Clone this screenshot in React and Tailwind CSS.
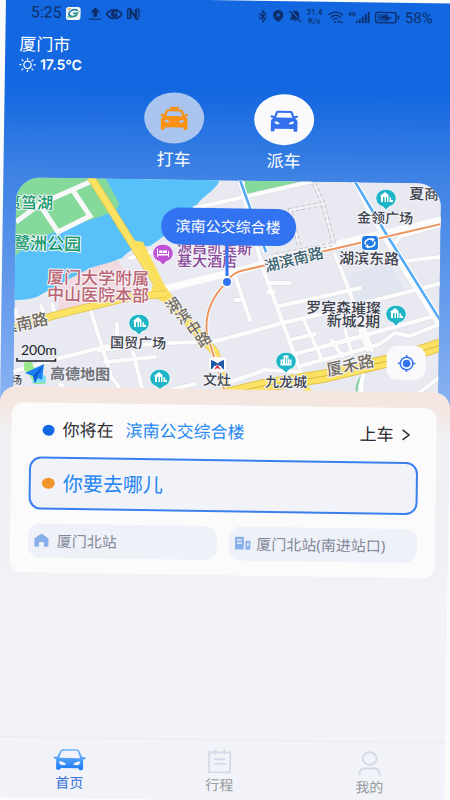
import React from "react";

const CJK = "font-['Noto_Sans','Noto_Sans_CJK_SC',sans-serif]";

function StatusBar() {
  return (
    <div className="flex h-[30px] items-center justify-between pl-[25px] pr-[23px] text-[#0c2f6b]">
      <div className="flex items-center gap-1">
        <span className="font-['Roboto',sans-serif] text-base leading-5">5:25</span>
        <svg width="15" height="13" viewBox="0 0 15 13">
          <rect width="15" height="13" rx="3" fill="#f2f6f8" />
          <path d="M12 3.6C9 1.6 4 3 3.2 6.4c-.5 3 4.500 4.500 7.600 1.600l.4-1.700H7.500" fill="none" stroke="#1f7fa8" strokeWidth="1.700" />
          <path d="M1.500 9.500C4 11.500 11 9 13.500 4" fill="none" stroke="#4cae6a" strokeWidth="1" />
          <path d="M2 2.500l3-1" stroke="#f2a13a" strokeWidth="1.200" />
        </svg>
        <svg className="ml-1" width="13" height="13" viewBox="0 0 13 13" fill="currentColor">
          <path d="M6.500 0 11.500 5.200H8.300V9.500H4.700V5.200H1.500zM0 11.300h13v1.100H0z" />
        </svg>
        <svg width="17" height="11" viewBox="0 0 17 11">
          <path d="M.8 5.500C4.500-.2 12.500-.2 16.200 5.500 12.500 11.200 4.500 11.200.8 5.500z" fill="none" stroke="currentColor" strokeWidth="1.600" />
          <circle cx="8.500" cy="5.300" r="3.300" fill="currentColor" />
          <circle cx="9.500" cy="4.300" r="1" fill="#1367e0" />
        </svg>
        <svg width="13" height="12" viewBox="0 0 13 12">
          <path d="M4 .8H2.500Q.8.800.8 2.500v7q0 1.700 1.700 1.700M9 11.200h1.500q1.700 0 1.700-1.700v-7Q12.200.8 10.500.8" fill="none" stroke="currentColor" strokeWidth="1.500" />
          <path d="M3.800 11V2.200L9.200 9.800V1" fill="none" stroke="currentColor" strokeWidth="2.200" />
        </svg>
      </div>
      <div className="flex items-center gap-[5px]">
        <svg width="10" height="13" viewBox="0 0 10 13" fill="none" stroke="currentColor" strokeWidth="1.200">
          <path d="M1.500 3.500 8 9 5 12V1l3 3-6.500 5.500" />
          <path d="M.3 6.500h1.200M8.700 6.500h1.200" />
        </svg>
        <svg width="11" height="12" viewBox="0 0 11 12">
          <path d="M5.500 0a5.200 5 0 0 1 5.200 5c0 3-2.700 5.200-5.200 7C3 10.200.3 8 .3 5a5.200 5 0 0 1 5.200-5z" fill="currentColor" />
          <circle cx="5.500" cy="4.900" r="1.600" fill="#1367e0" />
        </svg>
        <svg width="13" height="12" viewBox="0 0 13 12">
          <path d="M6.500.3c2.800.5 3.800 2 3.800 4.300 0 2.300.4 3.400 1.700 4.900H1c1.300-1.500 1.700-2.600 1.700-4.900C2.700 2.300 3.700.8 6.500.3zM5 10.200h3q-1.500 2.200-3 0z" fill="currentColor" />
          <path d="M1.500 0 13 11.500" stroke="#1367e0" strokeWidth="1.200" />
          <path d="M.4.5 12.300 12" stroke="currentColor" strokeWidth="1.200" />
        </svg>
        <span className="flex flex-col items-center font-['Roboto',sans-serif] text-[8px] font-medium leading-[9px]">
          <span>31.4</span>
          <span>K/s</span>
        </span>
        <svg width="16" height="13" viewBox="0 0 16 13" fill="none" stroke="currentColor" strokeWidth="1.300">
          <path d="M.8 4.200Q8-2.200 15.200 4.200M3 6.600Q8 2.200 13 6.600M5.200 9Q8 6.600 10 8.200" />
          <circle cx="7.500" cy="11.200" r="1" fill="currentColor" stroke="none" />
          <path d="M10 11h5M11.500 9.800l-1.500 1.200M13.500 12.200l1.500-1.200" strokeWidth="1" />
        </svg>
        <span className="flex items-start">
          <span className="font-['Roboto',sans-serif] text-[6px] font-bold leading-[6px]">4G</span>
          <svg width="14" height="12" viewBox="0 0 14 12" fill="currentColor">
            <path d="M0 9.500h2V12H0zM3 8h2v4H3zM6 5.500h2V12H6zM9 3h2v9H9zM12 .5h2V12h-2z" />
          </svg>
        </span>
        <svg width="25" height="12" viewBox="0 0 25 12">
          <rect x=".7" y=".7" width="20.600" height="10.600" rx="2.500" fill="none" stroke="currentColor" strokeWidth="1.400" />
          <rect x="2.500" y="2.500" width="11" height="7" rx="1" fill="currentColor" opacity=".45" />
          <path d="M5 6.200 12 2.500v2.700l5.500.6L11 9.500V6.900z" fill="currentColor" />
          <path d="M23.800 4v4" stroke="currentColor" strokeWidth="1.600" />
        </svg>
        <span className="font-['Roboto',sans-serif] text-[15px] leading-5">58%</span>
      </div>
    </div>
  );
}

function CarGlyph({ taxi }) {
  return (
    <svg width="28" height="24" viewBox="0 0 28 24" fill="currentColor">
      {taxi && <path d="M9.500 3V1.500Q9.500.3 10.700.3h6.600q1.200 0 1.200 1.200V3z" />}
      <path
        fillRule="evenodd"
        d="M7.500 2.800h13q1.600 0 2 1.400l1.400 3.800 3-.6q.9 0 .9 1t-1 1.100l-2 .4q2.500 1.400 2.500 3.600v9q0 .9-1 .9h-1.800q-1 0-1-.9v-1.700h-19v1.700q0 .9-1 .9H1.700q-1 0-1-.9v-9q0-2.200 2.500-3.600l-2-.4q-1-.1-1-1.100t.9-1l3 .6 1.400-3.800q.4-1.400 2-1.400zM7.700 4.800 5.800 9.500h16.400l-1.900-4.700zM5 13.200q-.8 0-.6.9.4 2 2.200 2h2.200q1 0 .4-.9-1.400-2-4.200-2zm18 0q-2.800 0-4.200 2-.6.9.4.9h2.200q1.800 0 2.200-2 .2-.9-.6-.9z"
      />
    </svg>
  );
}

function Modes() {
  return (
    <div className="grid grid-cols-[110px_110px] justify-center">
      <button className="flex flex-col items-center gap-[6px] text-[17px] leading-5 text-white">
        <span className="flex h-[51px] w-[60px] items-center justify-center rounded-[50%] bg-[#a9c4ef] text-[#fb9110]">
          <CarGlyph taxi />
        </span>
        打车
      </button>
      <button className="flex flex-col items-center gap-[6px] text-[17px] leading-5 text-white">
        <span className="flex h-[51px] w-[60px] items-center justify-center rounded-[50%] bg-[#fafafc] text-[#3270ee]">
          <CarGlyph />
        </span>
        派车
      </button>
    </div>
  );
}

function Label({ x, y, size = 14, color = "#3c414c", angle = 1, anchor = "middle", children }) {
  return (
    <text
      transform={`translate(${x} ${y}) rotate(${angle})`}
      fontSize={size}
      fill={color}
      textAnchor={anchor}
      stroke="#f6f6fa"
      strokeWidth="2"
      strokeLinejoin="round"
      paintOrder="stroke"
      fontWeight="500"
    >
      {children}
    </text>
  );
}

function Pin({ x, y, color = "#1fb5c6", kind = "mall" }) {
  return (
    <g transform={`translate(${x} ${y})`}>
      <path d="M0 12-3 8.800A10.200 9 0 1 1 3 8.800z" fill={color} stroke="#fff" strokeWidth=".8" />
      {kind === "mall" && (
        <path fill="#fff" fillRule="evenodd" d="M-6-2-1-6 2.500-3V4h-7.500V-1.500zM-3-1v5h1.500v-5zM0-1v5h1v-5zM3.500-1h1l1 3h1.500v2h-3.500z" />
      )}
      {kind === "city" && (
        <path fill="#fff" fillRule="evenodd" d="M-5.500-1.500h3v-4h5v4h3v6h-11zM-.8-3.500v6h.8v-6zM1-3.500v6h.6v-6zM-4 0v3h.6V0zM3.500 0v3h.6V0z" />
      )}
      {kind === "bed" && (
        <path fill="#fff" d="M-6-4.500h1V1H5v-3h1v6H5V2.500H-5V4h-1zM-4-2.500h3.500V0H-4zM0-2.500h4V0H0z" />
      )}
    </g>
  );
}

function MapView() {
  const roads = [
    "M180 257 218 236M150 292 250 268 285 256 380 236 450 218",
    "M195 208 310 182M130 258l22-6",
    "M98 350 160 343 212 342 250 332 282 323 330 312 450 281",
    "M15 371 60 358 108 346",
    "M91 312 112 378 125 395M117 324v18",
    "M41 306l6 14M52 304l4 12M15 310l4 12",
    "M105 362 155 357M133 352l10 40",
    "M235 276 250 320M240 300h-5",
    "M262 266 300 370 305 382",
    "M240 182 262 266",
    "M208 220 214 258M220 222l8 20",
    "M270 283h20M268 292h6",
    "M335 254 372 350M355 182l15 32 30 50 50 80",
    "M280 306 360 288M290 340 315 334M295 354 450 312",
    "M304 320 322 360M332 340 342 356M345 330 352 354M360 330 368 350",
    "M395 243l6-7 50-14M398 262l50-6",
    "M230 382 265 370 300 372 M310 378 360 366",
    "M145 396 195 384M420 392 450 370",
    "M300 366 360 350 380 344 395 333 410 336 450 320",
    "M60 384 75 396M310 350 370 335",
  ];
  return (
    <svg
      className="block h-full w-full font-['Noto_Sans_CJK_SC',sans-serif]"
      viewBox="0 0 425 214"
      preserveAspectRatio="xMidYMid slice"
      role="img"
      aria-label="地图"
    >
      <g transform="translate(-13 -180) rotate(-0.850) translate(-6 3)">
        <rect x="0" y="160" width="460" height="260" fill="#e9eaf1" />
        <path d="M0 160H222L219 182C212 194 196 199 194 212 180 224 162 238 150 246 134 246 128 252 122 258 100 266 60 284 42 294 30 302 20 298 0 302z" fill="#58c1fa" />
        <path d="M102 172 119 203Q119 210 110 213L55 232Q40 238 32 244 18 250 10 264V160H102z" fill="#85d99a" />
        <path d="M116 222 138 252 132 250 116 226z" fill="#85d99a" />
        <path d="M245 176h62l-8 8-54 14z" fill="#85d99a" />
        <path d="M90 268 118 260 130 282 152 290 134 296 58 312 60 284z" fill="#f2d9df" />
        <path d="M348 275 390 262 405 290 355 302z" fill="#e1e5f0" />
        <path d="M16 222 40 204 92 181M42 208 58 232 90 216 72 189" fill="none" stroke="#f8f8fa" strokeWidth="5" />
        {roads.map((d) => (
          <path key={`edge-${d}`} d={d} fill="none" stroke="#d9dbe2" strokeWidth="5" strokeLinejoin="round" strokeLinecap="round" />
        ))}
        {roads.map((d) => (
          <path key={d} d={d} fill="none" stroke="#fcfcfd" strokeWidth="4" strokeLinejoin="round" strokeLinecap="round" />
        ))}
        <path d="M152 292 250 268 285 256 450 218" fill="none" stroke="#fcfcfd" strokeWidth="7" />
        <path d="M314 183 323 204 334 244 272 256M323 204 290 210 299 245" fill="none" stroke="#b9bbc2" strokeWidth="4" strokeDasharray="4 2" />
        <path d="M314 183 323 204 334 244 272 256M323 204 290 210 299 245" fill="none" stroke="#f3f3f7" strokeWidth="2.400" />
        <path d="M240 180 266 252M354 180 385 232 450 336" fill="none" stroke="#fff" strokeWidth="5" />
        <path d="M240 180 266 252M354 180 385 232 450 336" fill="none" stroke="#57aaf6" strokeWidth="2.600" />
        <path d="M90 176 132 243 166 298 215 352 230 400" fill="none" stroke="#e3c348" strokeWidth="8" />
        <path d="M90 176 132 243 166 298 215 352 230 400" fill="none" stroke="#fbe263" strokeWidth="6.600" />
        <path d="M132 240 143 242 165 286 174 298 164 302 150 296 154 280z" fill="#f9df5c" />
        <path d="M10 328 60 314 130 297 166 294" fill="none" stroke="#e3c348" strokeWidth="7.600" />
        <path d="M10 328 60 314 130 297 166 294" fill="none" stroke="#fbe263" strokeWidth="6.200" />
        <path d="M215 397 262 386 325 376 400 358 450 342" fill="none" stroke="#e3c348" strokeWidth="13" />
        <path d="M215 397 262 386 325 376 400 358 450 342" fill="none" stroke="#fbe263" strokeWidth="11" />
        <path d="M215 397 262 386 325 376 400 358 450 342" fill="none" stroke="#d9b840" strokeWidth="1" />
        <path d="M300 380 312 396" stroke="#fbe263" strokeWidth="6" />
        <path d="M363 374q-8 10-6 20" fill="none" stroke="#7ed09a" strokeWidth="2" />
        <path d="M364 374q-5 10-2 20" fill="none" stroke="#fff" strokeWidth="4" />
        <path d="M450 222 325 251 245 270Q232 272 227 282 203 305 207 335 214 355 217 368L225 392" fill="none" stroke="#fff" strokeWidth="3.600" />
        <path d="M450 222 325 251 245 270Q232 272 227 282 203 305 207 335 214 355 217 368L225 392" fill="none" stroke="#eb9660" strokeWidth="2" />

        <Label x={5} y={208} size={16} color="#12996a" anchor="start">筼筜湖</Label>
        <Label x={13} y={249} size={17} color="#12996a" anchor="start">鹭洲公园</Label>
        <Label x={98} y={284} size={17} color="#bb6472">厦门大学附属</Label>
        <Label x={98} y={301} size={17} color="#bb6472">中山医院本部</Label>
        <Label x={177} y={253} size={15} color="#8a4b9c" anchor="start">源昌凯宾斯</Label>
        <Label x={177} y={266} size={15} color="#8a4b9c" anchor="start">基大酒店</Label>
        <Label x={266} y={272} size={15} color="#37606d" anchor="start" angle={-14}>湖滨南路</Label>
        <Label x={385} y={223}>金领广场</Label>
        <Label x={409} y={199} size={15} anchor="start">夏商</Label>
        <Label x={369} y={264} size={15}>湖滨东路</Label>
        <Label x={381} y={314} size={15} anchor="end">罗宾森璀璨</Label>
        <Label x={380} y={327} size={15} anchor="end">新城2期</Label>
        <Label x={138} y={348}>国贸广场</Label>
        <Label x={217} y={385}>文灶</Label>
        <Label x={286} y={387}>九龙城</Label>
        <Label x={2} y={334} size={16} color="#716a5e" anchor="start" angle={-12}>滨南路</Label>
        <Label x={328} y={376} size={16} color="#716a5e" anchor="start" angle={-12}>厦禾路</Label>
        <Label x={22} y={384} size={11} anchor="end">广场</Label>
        <text x="170 180 191 200" y="314 325 337 348" rotate="-33" fontSize="15" fontWeight="500" fill="#716a5e" stroke="#f6f6fa" strokeWidth="1.500" paintOrder="stroke">
          湖滨中路
        </text>

        <Pin x={386} y={198} />
        <Pin x={396} y={314} />
        <Pin x={139} y={323} />
        <Pin x={160} y={378} />
        <Pin x={286} y={361} kind="city" />
        <Pin x={163} y={253} color="#c052d6" kind="bed" />

        <rect x="361.500" y="235.500" width="17" height="15" rx="3.500" fill="#1f7ae6" stroke="#fff" />
        <g fill="none" stroke="#fff" strokeWidth="1.500">
          <path d="M365.500 244.500a5 4 0 0 1 7-5M374.500 241.500a5 4 0 0 1-7 5" />
        </g>
        <path d="m371.500 237.500 3.500 2-3 2.500zM368.500 248.500l-3.500-2 3-2.500z" fill="#fff" />

        <rect x="208.500" y="357" width="18" height="15" rx="3" fill="#fff" stroke="#dcdde2" strokeWidth=".6" />
        <path d="M211 360v9.500q2.500-.5 3-3.500 2 0 3.500-1.500 1.500 1.500 3.500 1.500.5 3 3 3.500V360q-3.500.5-6.500 3.500-3-3-6.500-3.500z" fill="#1d57a6" />
        <path d="m214 370 3.500-5.500L221 370l-3.500-2z" fill="#d83545" />

        <text x="21" y="355" fontSize="14" fill="#20242b" className="font-['Lato',sans-serif]">200m</text>
        <path d="M17 358v3h38.500v-2.500" fill="none" stroke="#20242b" strokeWidth="1.600" />

        <path d="M24 364q0-2 3-2h5q2 8 8 14l6 4v2q0 2-3 2H34q-4-10-10-14z" fill="#9be88a" />
        <path d="M36 372l10 4v4q0 3-3 3H32z" fill="#7fdcf3" />
        <path d="M44 364 25 373 33 376 35 383 38 378 42 380z" fill="#1c80f5" />
        <path d="M44 364 33 376 35 383 37 377z" fill="#0b5fd0" />
        <text x="50" y="379" transform="rotate(0.850 50 379)" fontSize="15" fontWeight="700" fill="#6f727a" stroke="#f6f6fa" strokeWidth="1.500" paintOrder="stroke">
          高德地图
        </text>

        <path d="M227 240v36" stroke="#3273f2" strokeWidth="3" />
        <circle cx="227" cy="282" r="5.500" fill="#fff" />
        <circle cx="227" cy="282" r="4" fill="#3273f2" />
      </g>
    </svg>
  );
}

function MapCard() {
  return (
    <section className="relative ml-[13px] mr-3 h-[214px] overflow-hidden rounded-t-[24px]">
      <MapView />
      <div className="absolute left-1/2 top-7 flex h-[37px] w-[135px] -translate-x-1/2 items-center justify-center rounded-full bg-[#3273f2] text-[15px] text-white">
        滨南公交综合楼
      </div>
      <button aria-label="定位" className="absolute right-[13px] top-[163px] flex h-[34px] w-[39px] items-center justify-center rounded-[11px] bg-[#fafafc]">
        <svg width="18" height="17" viewBox="0 0 18 17">
          <circle cx="9" cy="8.500" r="6.300" fill="none" stroke="#3273f2" strokeWidth="1.500" />
          <circle cx="9" cy="8.500" r="3.800" fill="#3273f2" />
          <path d="M9 0v3M9 14v3M0 8.500h3M15 8.500h3" stroke="#3273f2" strokeWidth="1.500" />
        </svg>
      </button>
    </section>
  );
}

function TripCard() {
  return (
    <section className="ml-3 mr-[13px] rounded-xl bg-[#fbfbfc] px-[18px] pb-[15px]">
      <button className="flex h-[54px] w-full items-center pl-[13px] pr-2 text-[17px] text-[#2b2c30]">
        <span className="mr-2 h-[11px] w-3 rounded-[50%] bg-[#1367e0]" />
        你将在
        <span className="ml-3 text-[#2388f2]">滨南公交综合楼</span>
        <span className="ml-auto mr-2">上车</span>
        <svg width="9" height="12" viewBox="0 0 9 12" fill="none" stroke="currentColor" strokeWidth="1.500">
          <path d="m1 1 6.500 5L1 11" />
        </svg>
      </button>
      <label className="flex h-[53px] items-center rounded-xl border-2 border-[#3b7fee] bg-[#f1f3f8] pl-[11px]">
        <span className="mr-2 h-[11px] w-[13px] rounded-[50%] bg-[#f19429]" />
        <input
          aria-label="目的地"
          placeholder="你要去哪儿"
          className="w-full min-w-0 flex-1 bg-transparent text-xl outline-none placeholder:text-[#1f85f2] placeholder:opacity-100"
        />
      </label>
      <div className="mt-[14px] grid grid-cols-2 gap-3 text-[15px] text-[#84879a]">
        <button className="flex h-[34px] items-center gap-2 whitespace-nowrap rounded-xl bg-[#eef1f7] pl-1.5">
          <svg width="15" height="14" viewBox="0 0 15 14" fill="#8ab0ec">
            <path d="M6.300.7q1.200-.9 2.400 0l5 3.500q.9.700.9 1.700v5.800q0 1.500-1.600 1.500H10V9.500q0-1-1-1H6q-1 0-1 1v3.700H2Q.4 13.200.4 11.700V5.900q0-1 .9-1.700z" />
          </svg>
          厦门北站
        </button>
        <button className="flex h-[34px] items-center gap-1.5 whitespace-nowrap rounded-xl bg-[#eef1f7] pl-1.5">
          <svg width="16" height="14" viewBox="0 0 16 14">
            <rect width="9" height="13" rx="1" fill="#8ab0ec" />
            <path d="M2 3.500h5M2 6.500h5" stroke="#eef1f7" strokeWidth="1.300" />
            <rect x="10.500" y="4" width="5" height="9" rx="1" fill="#8ab0ec" />
            <path d="M13 6v3.500" stroke="#eef1f7" strokeWidth="1.500" />
          </svg>
          厦门北站(南进站口)
        </button>
      </div>
    </section>
  );
}

function TabBar() {
  return (
    <nav className="mt-auto grid h-[61px] grid-cols-3 border-t border-[#e8eaee] pt-2 text-sm leading-5 text-[#96999e]">
      <a href="#home" className="flex flex-col items-center gap-px text-[#3570d6]">
        <svg width="34" height="26" viewBox="0 0 34 26">
          <defs>
            <linearGradient id="tabCar" x1="0" y1="0" x2="0" y2="1">
              <stop offset="0" stopColor="#7cbcfb" />
              <stop offset="1" stopColor="#1a7af5" />
            </linearGradient>
          </defs>
          <path
            fill="url(#tabCar)"
            fillRule="evenodd"
            d="M10 3h14q1.800 0 2.500 1.600L29.500 11H32q1 0 1 1t-1 1h-1.500v9.500q0 1.500-1.500 1.500h-1.500q-1.500 0-1.500-1.500V22H8v.5Q8 24 6.500 24H5q-1.500 0-1.500-1.500V13H2q-1 0-1-1t1-1h2.500l3-6.400Q8.200 3 10 3zm.3 1.700q-1 0-1.400 1L6.500 12h21l-2.400-6.300q-.4-1-1.400-1zM6.500 15.500q0 3.500 3 3.500H12q2 0 .5-1.600Q10 15 6.500 15.500zm21 0q-3.500-.5-6 1.900Q20 19 22 19h2.500q3 0 3-3.500z"
          />
        </svg>
        首页
      </a>
      <a href="#trips" className="flex flex-col items-center gap-px">
        <svg width="34" height="26" viewBox="0 0 34 26" fill="none" stroke="#d3d9e6" strokeWidth="1.800">
          <path d="M6.500 4h21v20h-21zM12.500 1v5.500M21.500 1v5.500M11 11h12M11 15.500h12" />
        </svg>
        行程
      </a>
      <a href="#me" className="flex flex-col items-center gap-px">
        <svg width="34" height="26" viewBox="0 0 34 26" fill="none" stroke="#d3d9e6" strokeWidth="1.900">
          <ellipse cx="17" cy="8" rx="7" ry="6.300" />
          <path d="M7 25v-1.500q0-5.500 5.500-5.500h9q5.500 0 5.500 5.500V25" />
        </svg>
        我的
      </a>
    </nav>
  );
}

export default function App() {
  return (
    <div className={`h-screen overflow-hidden bg-[#fafbfb] ${CJK}`}>
      <main className="flex h-full w-full origin-top-left translate-x-[6px] translate-y-[-3px] rotate-[0.85deg] flex-col bg-[linear-gradient(#1367e0_90px,#3e82e4_175px,#88b2f2_400px,#f1f3f8_420px)]">
        <StatusBar />
        <header className="mt-[7px] pl-[14px] text-white">
          <h1 className="text-[17px] leading-5">厦门市</h1>
          <p className="flex h-5 items-center gap-1 font-['Inter',sans-serif] text-sm font-semibold">
            <svg width="17" height="15" viewBox="0 0 17 15" fill="none" stroke="currentColor" strokeWidth="1.200" strokeLinecap="round">
              <circle cx="8.500" cy="7.500" r="3.700" />
              <path d="M8.500.7v1.200M8.500 13.100v1.200M.8 7.500H2M15 7.500h1.200M3 2.500l1 .9M13 11.600l1 .9M3 12.500l1-.9M13 3.400l1-.9" />
            </svg>
            17.5°C
          </p>
        </header>
        <div className="mt-4 mb-[10px]">
          <Modes />
        </div>
        <MapCard />
        <div className="relative -mt-[5px] flex flex-1 flex-col rounded-t-2xl bg-[#f1f3f8] bg-[linear-gradient(#f5e5de,#f4e6e1_14px,#f0f1f4_50px,#eff1f5_180px,#f1f3f8_200px)] pt-4">
          <TripCard />
          <TabBar />
        </div>
      </main>
    </div>
  );
}
